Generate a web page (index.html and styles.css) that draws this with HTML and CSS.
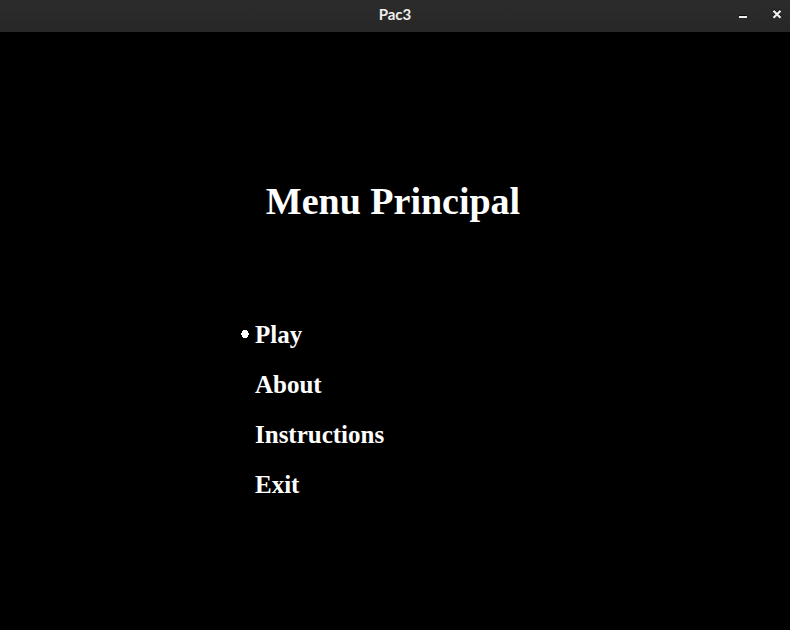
FILE: index.html
```html
<!DOCTYPE html>
<html lang="en">
<head>
<meta charset="utf-8">
<title>Pac3</title>
<link rel="stylesheet" href="styles.css">
</head>
<body>
<header class="titlebar">
  <span class="title">Pac3</span>
  <div class="controls">
    <button class="control" type="button" aria-label="Minimize"><svg width="10" height="10" viewBox="0 0 10 10"><path d="M1 6h8v1h-8z" fill="#0c0c0c"/><path d="M1 7h8v2h-8z" fill="#eeeeec"/></svg></button>
    <button class="control" type="button" aria-label="Close"><svg width="10" height="10" viewBox="0 0 10 10"><path d="M1.5 .7l7 7M8.5 .7l-7 7" stroke="#0c0c0c" stroke-width="2"/><path d="M1.5 1.7l7 7M8.5 1.7l-7 7" stroke="#eeeeec" stroke-width="2.2"/></svg></button>
  </div>
</header>
<main class="screen">
  <h1 class="heading">Menu Principal</h1>
  <nav class="menu">
    <button class="item" type="button"><svg class="marker" width="8" height="8" viewBox="0 0 8 8" shape-rendering="crispEdges"><path d="M2 0h4v1h1v2h1v2h-1v2h-1v1h-4v-1h-1v-2h-1v-2h1v-2h1z" fill="#fff"/></svg>Play</button>
    <button class="item" type="button">About</button>
    <button class="item" type="button">Instructions</button>
    <button class="item" type="button">Exit</button>
  </nav>
</main>
</body>
</html>
```
FILE: styles.css
```css
body {
  margin: 0;
  min-height: 100vh;
  background: #000;
  color: #fff;
  font-family: "Liberation Serif", serif;
}

.titlebar {
  display: grid;
  grid-template-columns: 1fr auto 1fr;
  align-items: center;
  height: 32px;
  box-sizing: border-box;
  padding-bottom: 4px;
  background: linear-gradient(#2c2c2c, #272727);
}

.title {
  grid-column: 2;
  color: #eeeeec;
  font: bold 15px/20px Lato, sans-serif;
}

.controls {
  display: flex;
  justify-content: flex-end;
  gap: 24px;
  padding-right: 8px;
}

.control {
  display: flex;
  padding: 0;
  border: 0;
  background: none;
}

.screen {
  display: flex;
  flex-direction: column;
  align-items: center;
  padding: 145px 4px 0 0;
}

.heading {
  margin: 0;
  font-size: 38px;
  line-height: 48px;
}

.menu {
  display: flex;
  flex-direction: column;
  align-items: flex-start;
  width: 276px;
  margin-top: 85px;
}

.item {
  position: relative;
  height: 50px;
  padding: 0;
  border: 0;
  background: none;
  color: inherit;
  font: bold 25px/50px "Liberation Serif", serif;
}

.marker {
  position: absolute;
  top: 20px;
  left: -14px;
}
```
